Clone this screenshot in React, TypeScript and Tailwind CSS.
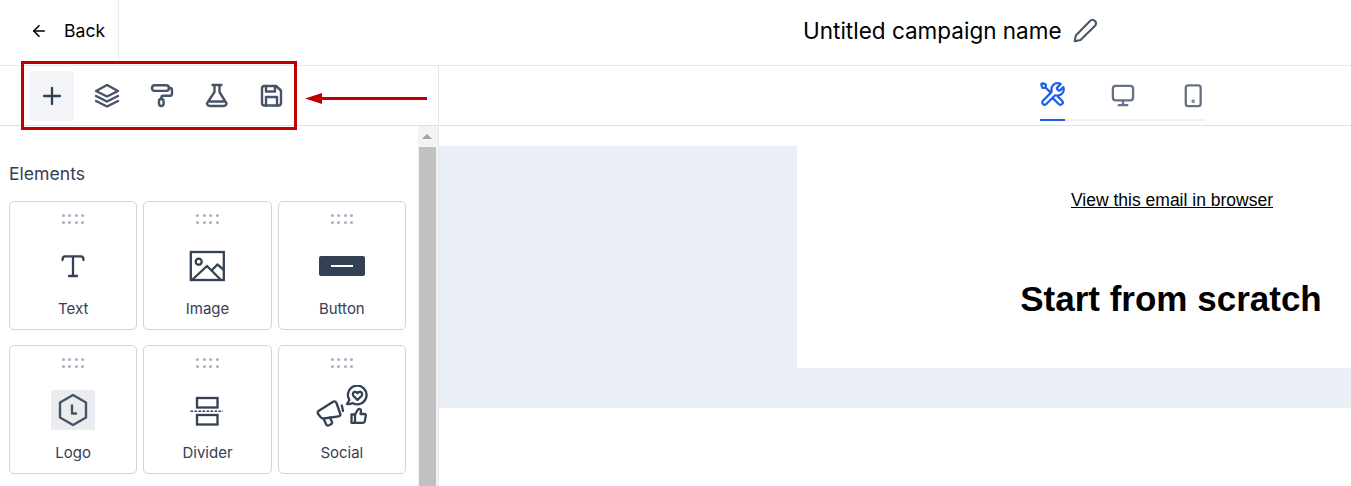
import React from "react";
import { ArrowLeft } from "lucide-react";

const ic = "fill-none stroke-[#475467] stroke-[2.4px] [stroke-linecap:round] [stroke-linejoin:round]";
const ic2 = "fill-none stroke-[#344054] stroke-[2.3px] [stroke-linecap:round] [stroke-linejoin:round]";

function Tool({ active, children }: { active?: boolean; children: React.ReactNode }) {
  return (
    <div className={"w-[45px] h-[50px] rounded flex items-center justify-center " + (active ? "bg-[#f2f4f7]" : "")}>
      {children}
    </div>
  );
}

function Dots() {
  return (
    <div className="grid grid-cols-4 gap-x-[3.5px] gap-y-[4px] w-[22.5px] h-[10px]">
      {Array.from({ length: 8 }).map((_, i) => (
        <span key={i} className="w-[3px] h-[3px] rounded-full bg-[#a8b0c2]" />
      ))}
    </div>
  );
}

function Card({ label, children }: { label: string; children: React.ReactNode }) {
  return (
    <div className="h-[129px] rounded-[5px] border border-[#d0d5dd] flex flex-col items-center pt-[12px]">
      <Dots />
      <div className="mt-[17px] h-[50px] flex items-center justify-center">{children}</div>
      <div className="mt-[8px] h-[20px] text-[15px] leading-[20px] text-[#344054]">{label}</div>
    </div>
  );
}

export default function App() {
  return (
    <div className="relative w-[1351px] h-[486px] overflow-hidden bg-white font-['Inter',sans-serif]">
      {/* header */}
      <div className="h-[66px] flex border-b border-[#e8e8e8]">
        <div className="w-[119px] border-r border-[#ececec] flex items-center pl-[30px] pb-[3px] gap-[16px]">
          <ArrowLeft size={18} strokeWidth={2.2} className="text-black" />
          <span className="text-[17.6px] text-black">Back</span>
        </div>
        <div className="flex items-center pl-[684px] pb-[3px] gap-[10px]">
          <span className="text-[22.5px] text-black whitespace-nowrap">Untitled campaign name</span>
          <svg width="26" height="26" viewBox="1071 18 26 26" className="fill-none stroke-[#475467] stroke-2 [stroke-linecap:round] [stroke-linejoin:round]">
            <path d="M1073.7 41.3 L1074.8 35.5 L1089 21 C1090.5 19.5 1092.5 19.5 1094 21 C1095.3 22.5 1095.3 24.5 1093.8 26 L1079.5 40 Z" />
          </svg>
        </div>
      </div>
      {/* toolbar row */}
      <div className="h-[60px] flex border-b border-[#e0e0e0]">
        <div className="w-[439px] border-r border-[#e8e8e8] flex items-start pt-[5px] pl-[29px] gap-[10px]">
          <Tool active>
            <svg width="24" height="24" viewBox="39 84 24 24" className={ic2}>
              <path d="M51 88 V104 M43 96 H59" />
            </svg>
          </Tool>
          <Tool>
            <svg width="26" height="26" viewBox="94 83 26 26" className={ic}>
              <path d="M107 85 L118 91 L107 96.5 L96 91 Z" />
              <path d="M96 96 L107 101.5 L118 96" />
              <path d="M96 101 L107 106.5 L118 101" />
            </svg>
          </Tool>
          <Tool>
            <svg width="26" height="26" viewBox="149 83 26 26" className={ic}>
              <rect x="152" y="85.3" width="17" height="5.6" rx="2.8" />
              <path d="M169 88 H170 C171.5 88 172 88.8 172 90 V93.5 C172 95 171.2 95.8 170 95.8 H163.5 C162 95.8 161.3 96.5 161.3 98 V99" />
              <rect x="159" y="99" width="4.6" height="7" rx="2.2" />
            </svg>
          </Tool>
          <Tool>
            <svg width="26" height="26" viewBox="204 83 26 26" className={ic}>
              <path d="M212.5 85 H221.5 M214.5 85.5 V92 L208.5 101 C206 103.5 207 106 210 106 H223.5 C226.5 106 227.5 103.5 225 101 L219.5 92 V85.5" />
              <path d="M208.5 101.5 H225" />
            </svg>
          </Tool>
          <Tool>
            <svg width="26" height="26" viewBox="259 83 26 26" className={ic}>
              <path d="M262 88.5 C262 87 263 86 264.5 86 H276 L281 90.5 V103 C281 104.5 280 105.5 278.5 105.5 H264.5 C263 105.5 262 104.5 262 103 Z" />
              <path d="M266 86 V91.5 H275 V86.5" />
              <path d="M266 105.5 V97 H277 V105.5" />
            </svg>
          </Tool>
        </div>
        <div className="flex-1 flex pl-[601px] items-start">
          <div className="w-[165px] h-[40px] mt-[15px] flex border-b-2 border-[#f2f2f2]">
            <div className="w-[25px] h-[40px] border-b-2 border-[#1d5fe8] flex items-start justify-center shrink-0">
              <svg width="27" height="27" viewBox="0 0 24 24" className="shrink-0 fill-none stroke-[#1d5fe8] stroke-2 [stroke-linecap:round] [stroke-linejoin:round]">
                <path d="M6 6L10.5 10.5M6 6H3L2 3L3 2L6 3V6ZM19.259 2.74L16.6314 5.36765C16.2354 5.76367 16.0373 5.96168 15.9632 6.19001C15.8979 6.39086 15.8979 6.60721 15.9632 6.80806C16.0373 7.03639 16.2354 7.2344 16.6314 7.63042L16.8686 7.86765C17.2646 8.26367 17.4627 8.46168 17.691 8.53587C17.8918 8.60113 18.1082 8.60113 18.309 8.53587C18.5373 8.46168 18.7354 8.26367 19.1314 7.86765L21.5893 5.40973C21.854 6.05379 22 6.75889 22 7.49904C22 10.5366 19.5376 12.999 16.5 12.999C16.1338 12.999 15.7759 12.9632 15.4298 12.8949C14.9436 12.7989 14.7005 12.751 14.5532 12.7656C14.3965 12.7811 14.3193 12.8046 14.1805 12.8789C14.0499 12.9488 13.919 13.0797 13.657 13.3417L6.5 20.4987C5.67157 21.3271 4.32843 21.3271 3.5 20.4987C2.67157 19.6703 2.67157 18.3271 3.5 17.4987L10.657 10.3417C10.919 10.0797 11.0499 9.9488 11.1198 9.81827C11.1941 9.67945 11.2176 9.60226 11.2331 9.44553C11.2477 9.29824 11.1997 9.05515 11.1038 8.56898C11.0355 8.22287 10.9997 7.86506 10.9997 7.49904C10.9997 4.46147 13.4621 1.99904 16.4997 1.99904C17.5 1.99904 18.4375 2.26639 19.259 2.74ZM12.0001 14.9999L17.5 20.4998C18.3284 21.3283 19.6716 21.3283 20.5 20.4998C21.3284 19.6714 21.3284 18.3283 20.5 17.4998L15.9753 12.9753" />
              </svg>
            </div>
            <div className="ml-[45px] w-[25px] flex items-start justify-center pt-[2px] shrink-0">
              <svg width="26" height="26" viewBox="1109 83 26 26" className={ic + " stroke-[#667085]"}>
                <rect x="1112" y="85.5" width="21" height="15" rx="3" />
                <path d="M1122.5 101 V105 M1118 105.5 H1127" />
              </svg>
            </div>
            <div className="ml-[45px] w-[25px] flex items-start justify-center pt-[2px] shrink-0">
              <svg width="26" height="26" viewBox="1179 83 26 26" className={ic + " stroke-[#667085]"}>
                <rect x="1185" y="85" width="15.5" height="21.5" rx="2.5" />
                <circle cx="1192.7" cy="101.5" r="0.6" />
              </svg>
            </div>
          </div>
        </div>
      </div>
      {/* body */}
      <div className="flex h-[360px]">
        <div className="w-[418px] pl-[9px] pt-[35px] shrink-0">
          <div className="text-[17.6px] leading-[25px] text-[#344054]">Elements</div>
          <div className="mt-[15px] w-[397px] grid grid-cols-3 gap-x-[6px] gap-y-[15px]">
            <Card label="Text">
              <svg width="26" height="26" viewBox="60 253 26 26" className={ic2}>
                <path d="M62.5 260 C62.5 257.5 63 256.3 65 256.3 H81 C83 256.3 83.5 257.5 83.5 260 M73 256.3 V276 M69 276 H77" />
              </svg>
            </Card>
            <Card label="Image">
              <svg width="38" height="34" viewBox="189 249 38 34" className="fill-none stroke-[#344054] stroke-[2.3px]">
                <rect x="191.8" y="252" width="33" height="28" />
                <circle cx="199.7" cy="261.7" r="3" />
                <path d="M193 280 L208 266 L222 280 M213 270 L218.5 264.5 L225 270" />
              </svg>
            </Card>
            <Card label="Button">
              <div className="w-[46px] h-[20px] rounded-[2px] bg-[#344054] flex items-center justify-center">
                <div className="w-[22px] h-[2px] bg-white" />
              </div>
            </Card>
            <Card label="Logo">
              <div className="w-[44px] h-[40px] bg-[#eaecf0] rounded-[1px] flex items-center justify-center">
                <svg width="32" height="34" viewBox="57 393 32 34" className={ic}>
                  <path d="M73 395 L86 402.5 V417.5 L73 425 L60 417.5 V402.5 Z" />
                  <path d="M72 405.5 V413.5 H76" />
                </svg>
              </div>
            </Card>
            <Card label="Divider">
              <svg width="36" height="32" viewBox="190 394 36 32" className="fill-none stroke-[#344054] stroke-[2.3px]">
                <rect x="198" y="398" width="20.5" height="9.5" />
                <rect x="198" y="415" width="20.5" height="9.5" />
                <path d="M191.5 411.3 H224" strokeWidth="1.4" strokeDasharray="2.6 1.4" />
              </svg>
            </Card>
            <Card label="Social">
              <svg width="54" height="50" viewBox="315 385 54 50" className={ic2}>
                <path d="M347 404 L349.4 400 A9.3 9.3 0 1 1 352.5 403 C350.5 404 349 404.2 347 404 Z" />
                <path d="M357.5 400 L353.3 395.8 C351.8 393.8 353.8 391 356 392 L357.5 393.2 L359 392 C361.2 391 363.2 393.8 361.7 395.8 Z" />
                <path d="M318.5 411 L333.5 401.5 Q335.5 401 336.5 403 L340.3 414 Q340.8 416 338.5 416.3 L324 418.5 Q321.5 418.8 320.5 417 L317.8 413.5 Q317.3 412 318.5 411 Z" />
                <path d="M323.5 418.5 L326.5 425 Q327.5 426 329 425.3 L331.5 424 Q332.5 423 332 422 L330 417.5" />
                <path d="M341.8 405.5 L343 411" />
                <path d="M351.5 414.5 H355 V422.8 H351.5 Z" />
                <path d="M355 414.5 L358 409.5 C359.8 408.3 361.3 409.5 361 411.5 L360.5 414 H364.5 C365.6 414 366 415 365.8 416 L364.8 421 C364.5 422.3 363.5 422.8 362.5 422.8 H355" />
              </svg>
            </Card>
          </div>
        </div>
        {/* scrollbar */}
        <div className="w-[21px] shrink-0 bg-[#f3f3f3] flex flex-col border-r border-[#e8e8e8]">
          <div className="h-[21px] flex items-center justify-center pr-[2px]">
            <div className="w-0 h-0 border-x-[5px] border-x-transparent border-b-[5px] border-b-[#a3a3a3]" />
          </div>
          <div className="w-[17px] ml-[1px] flex-1 bg-[#c1c1c1]" />
        </div>
        {/* canvas */}
        <div className="flex-1 min-w-0 overflow-hidden pt-[20px]">
          <div className="h-[262px] bg-[#eaeef6] pl-[358px] pb-[40px]">
            <div className="w-[748px] h-[222px] bg-white flex flex-col items-center font-['Liberation_Sans',sans-serif] text-black">
              <a className="mt-[43px] ml-[2px] text-[17.5px] leading-[22px] underline">View this email in browser</a>
              <div className="mt-[67px] text-[35px] leading-[42px] font-bold whitespace-nowrap">Start from scratch</div>
            </div>
          </div>
        </div>
      </div>
      {/* annotation overlay */}
      <div className="absolute left-[21px] top-[61px] w-[276px] h-[69px] border-[3px] border-[#c00000]" />
      <svg className="absolute left-[300px] top-[88px]" width="130" height="20" viewBox="300 88 130 20">
        <path d="M427 98.5 H318" stroke="#c00000" strokeWidth="3" />
        <path d="M305 98.5 L322 93 V104 Z" fill="#c00000" />
      </svg>
    </div>
  );
}
